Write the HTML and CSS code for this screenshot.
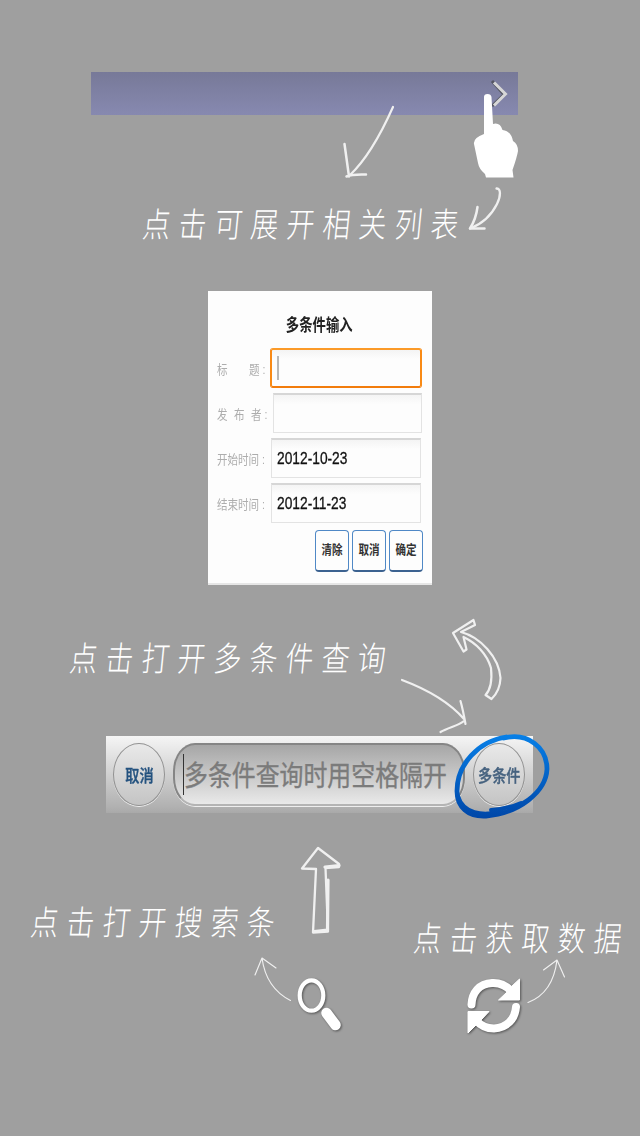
FILE: index.html
```html
<!DOCTYPE html>
<html lang="zh-CN">
<head>
<meta charset="utf-8">
<title>使用帮助</title>
<link rel="stylesheet" href="styles.css">
</head>
<body>
<main class="guide">
  <div class="list-bar"></div>
  <p class="note note-list"><span>点击可展开相关列表</span></p>

  <form class="dialog">
    <h1><span class="narrow">多条件输入</span></h1>
    <div class="row"><label class="spread"><span class="narrow">标</span><span class="narrow">题 :</span></label><div class="field active"><i></i></div></div>
    <div class="row"><label class="spread publisher"><span class="narrow">发</span><span class="narrow">布</span><span class="narrow">者 :</span></label><div class="field offset"></div></div>
    <div class="row"><label><span class="narrow">开始时间 :</span></label><div class="field short"><span class="narrow">2012-10-23</span></div></div>
    <div class="row"><label><span class="narrow">结束时间 :</span></label><div class="field short"><span class="narrow">2012-11-23</span></div></div>
    <div class="actions">
      <button type="button"><span class="narrow">清除</span></button>
      <button type="button"><span class="narrow">取消</span></button>
      <button type="button"><span class="narrow">确定</span></button>
    </div>
  </form>

  <p class="note note-multi"><span>点击打开多条件查询</span></p>

  <div class="search-bar">
    <button type="button" class="round"><span class="narrow">取消</span></button>
    <div class="query"><i></i><span class="narrow">多条件查询时用空格隔开</span></div>
    <button type="button" class="round multi"><span class="narrow">多条件</span></button>
  </div>

  <div class="bottom-notes">
    <p class="note"><span>点击打开搜索条</span></p>
    <p class="note note-data"><span>点击获取数据</span></p>
  </div>

  <div class="tools">
    <svg class="icon" width="50" height="58" viewBox="295 975 50 58">
      <ellipse cx="311.5" cy="995.500" rx="11.800" ry="15.200" fill="none" stroke="#fff" stroke-width="4.200"/>
      <path d="M326.500 1013L335.500 1025" stroke="#fff" stroke-width="10.500" stroke-linecap="round"/>
    </svg>
    <svg class="icon" width="60" height="62" viewBox="464 974 60 62">
      <path d="M471.500 1003.500C472 992 479 982.500 492 982C501 981.500 507 985 512 991" fill="none" stroke="#fff" stroke-width="8" stroke-linecap="round"/>
      <path d="M519.500 978V999H498.500L506 992L512 985Z" fill="#fff" stroke="#fff" stroke-linejoin="round"/>
      <path d="M516 1006C515 1018 507 1027 494 1027.500C486 1027.500 480 1024 476 1019" fill="none" stroke="#fff" stroke-width="8" stroke-linecap="round"/>
      <path d="M468 1010.500H489L482 1018L476 1024L468 1032Z" fill="#fff" stroke="#fff" stroke-linejoin="round"/>
    </svg>
  </div>

  <svg class="marks" width="640" height="1136" viewBox="0 0 640 1136" aria-hidden="true">
    <defs>
      <linearGradient id="ink" gradientUnits="userSpaceOnUse" x1="0" y1="734" x2="0" y2="818"><stop offset="0" stop-color="#0780e8"/><stop offset="1" stop-color="#0047a8"/></linearGradient>
    </defs>
    <path d="M492 81L504 94.500L492 106" fill="none" stroke="#555763" stroke-width="3"/>
    <path d="M494 82.500L505.500 94L494 105.500" fill="none" stroke="#d7d7d7" stroke-width="3"/>
    <path d="M484 97Q484 94 487.500 94Q491 94 491.500 97L493 124Q500 122 502.500 130Q511 131 513 141Q518 144 518 151Q517 157 512.500 170L513.500 177.500H486L485 174Q479 169 478 163L474 144Q473 138 484 134Z" fill="#fff"/>
    <g class="chalk">
      <path d="M393 107C380 136 366 160 350 175" stroke-width="2.200"/>
      <path d="M344.500 144L349 176.500M346.500 176.500Q352 174 366 174.500" stroke-width="2.500"/>
      <path d="M496.500 188.500C501 188 501 196 497 204C491 216 482 224 470 228.500" stroke-width="2.300"/>
      <path d="M477.500 207Q476 219 470 228.500L484.500 228.500" stroke-width="2.500"/>
      <path d="M453 633L473.500 620L475 625L461 632C480 637 499 657 500.500 678Q500 691 491.500 699L485.500 695Q493 687 491 668C487 654 476 643 463.500 637L466.500 649.500L463.500 651.500Z" stroke-width="2.200"/>
      <path d="M402 680C426 689 450 703 464 719M460.500 701Q463 710 465.500 724M464 721C458 726 449 727 440.500 732" stroke-width="2.200"/>
      <path d="M318 848L339 864V867L325.500 868L328 931.500L313 932.500L316 869L302 868.500Z" stroke-width="2.300"/>
      <path d="M325 867L339 865.500M328 880L327.500 930L314 931.500" stroke-width="3.200"/>
      <path d="M290.500 1000.500Q266 988 262 958M255 975L262 958L276 968" stroke-width="1.150"/>
      <path d="M528 1002.500Q553 993 557 960M543.500 970L557 960L564.500 977" stroke-width="1.150"/>
    </g>
    <g fill="none" stroke="url(#ink)" stroke-linecap="round">
      <path d="M504 738C528 732 547 748 547 769C546 792 519 813 486 816C468 817 457 807 457 791C457 764 479 741 506 737" stroke-width="4.800"/>
      <path d="M458 796C463 813 482 817 502 811M491 810Q507 809 521 803" stroke-width="4"/>
    </g>
  </svg>
</main>
</body>
</html>
```
FILE: styles.css
```css
* { box-sizing: border-box; }
body {
  margin: 0;
  background: #9f9f9f;
  font-family: "Liberation Sans", "Noto Sans CJK SC", sans-serif;
}
p, h1 { margin: 0; }
button { padding: 0; font-family: inherit; }

.guide {
  position: relative;
  width: 640px;
  height: 1136px;
  padding-top: 72px;
  overflow: hidden;
}
.narrow {
  display: inline-block;
  flex: none;
  white-space: nowrap;
  transform: scaleX(.81);
}

.list-bar {
  width: 427px;
  height: 43px;
  margin-left: 91px;
  background: linear-gradient(#777998, #8789b0);
}

.note {
  height: 44px;
  line-height: 44px;
  color: #fff;
  font-family: "Noto Sans CJK SC", sans-serif;
  font-size: 31px;
  font-weight: 300;
  letter-spacing: 9px;
  white-space: nowrap;
}
.note span {
  display: inline-block;
  transform: translateY(-1px) scale(.9, 1.1) skewX(-7deg);
  transform-origin: left center;
}
.note-list { margin: 87px 0 0 143px; }
.note-multi { margin: 51px 0 0 70px; }

.dialog {
  width: 224px;
  height: 294px;
  margin: 45px 0 0 208px;
  padding: 20px 10px 0 9px;
  background: #fdfdfd;
  border-bottom: 2px solid #e6e6e6;
}
.dialog h1 {
  height: 37px;
  line-height: 29px;
  text-align: center;
  font-size: 16.5px;
  font-weight: 700;
  color: #222;
}
.row {
  display: flex;
  align-items: center;
  height: 40px;
  margin-bottom: 5px;
}
.row label {
  display: flex;
  width: 53px;
  flex: none;
  font-size: 13px;
  color: #adadad;
}
.row label .narrow { transform-origin: left center; }
.spread { justify-content: space-between; }
.spread .narrow:last-child { margin-right: 1px; }
.spread.publisher .narrow:last-child { margin-right: -1px; }
.field {
  display: flex;
  align-items: center;
  flex: 1;
  height: 40px;
  padding-left: 7px;
  border: 1.5px solid #e3e3e3;
  border-top: 2px solid #d6d6d6;
  background: linear-gradient(#f4f4f4, #fdfdfd 25%);
  font-size: 17px;
  color: #111;
  -webkit-text-stroke: .3px #111;
}
.field .narrow { transform-origin: left center; margin-left: -2px; }
.field.offset { margin-left: 3px; }
.field.short { margin: 0 1px; }
.field.active {
  border: 2.5px solid;
  border-color: #fb9a28 #f98a15 #f27c0c;
  border-radius: 3px;
  padding-left: 5px;
}
.field i { width: 1.5px; height: 24px; background: #b8b8b8; }
.actions {
  display: flex;
  justify-content: flex-end;
  gap: 3px;
  padding-top: 2px;
  margin-right: -1px;
}
.actions button {
  display: flex;
  align-items: center;
  justify-content: center;
  width: 34px;
  height: 42px;
  border: 1.5px solid #4f88c6;
  border-bottom: 2px solid #3c6290;
  border-radius: 4px;
  background: #fdfdfd;
  font-size: 13px;
  font-weight: 700;
  color: #333;
}
.actions .narrow { transform: translateY(-2px) scaleX(.81); }

.search-bar {
  display: flex;
  align-items: center;
  gap: 8px;
  width: 427px;
  height: 77px;
  margin: 56px 0 0 106px;
  padding: 0 8px 0 7px;
  background: linear-gradient(#f5f5f5, #b0b0b0 93%, #a9a9a9);
}
.round {
  display: flex;
  align-items: center;
  justify-content: center;
  flex: none;
  width: 52px;
  height: 63px;
  border: 1.5px solid #929292;
  border-radius: 50%;
  background: linear-gradient(#e9e9e9, #c4c4c4);
  box-shadow: 0 1px 0 #eee;
  font-size: 17.5px;
  font-weight: 500;
  color: #24527f;
  -webkit-text-stroke: .4px currentColor;
}
.multi { color: #46627f; }
.query {
  display: flex;
  align-items: center;
  flex: 1;
  height: 63px;
  min-width: 0;
  padding-left: 8px;
  border: 2px solid #858585;
  border-bottom-color: #b4b4b4;
  border-radius: 22px / 28px;
  background: linear-gradient(#a6a6a6, #e9e9e9);
  box-shadow: 0 1px 0 #eee;
  font-size: 29.5px;
  color: #7b7b7b;
  -webkit-text-stroke: .4px currentColor;
}
.query i { flex: none; width: 1px; height: 41px; background: #333; }
.query .narrow { transform: translateY(-1px) scale(.81, .95); transform-origin: left center; }

.bottom-notes {
  display: flex;
  align-items: flex-start;
  height: 80px;
  margin-top: 87px;
  padding-left: 31px;
}
.bottom-notes .note { width: 383px; flex: none; }
.bottom-notes .note-data { width: 220px; margin-top: 16px; }
.tools {
  display: flex;
  gap: 119px;
  margin-top: -5px;
  padding-left: 295px;
}
.icon { flex: none; filter: drop-shadow(1px 1px 1px #555); }

.marks { position: absolute; inset: 0; pointer-events: none; }
.chalk {
  fill: none;
  stroke: #f0f0f0;
  stroke-linecap: round;
  stroke-linejoin: round;
}
```
